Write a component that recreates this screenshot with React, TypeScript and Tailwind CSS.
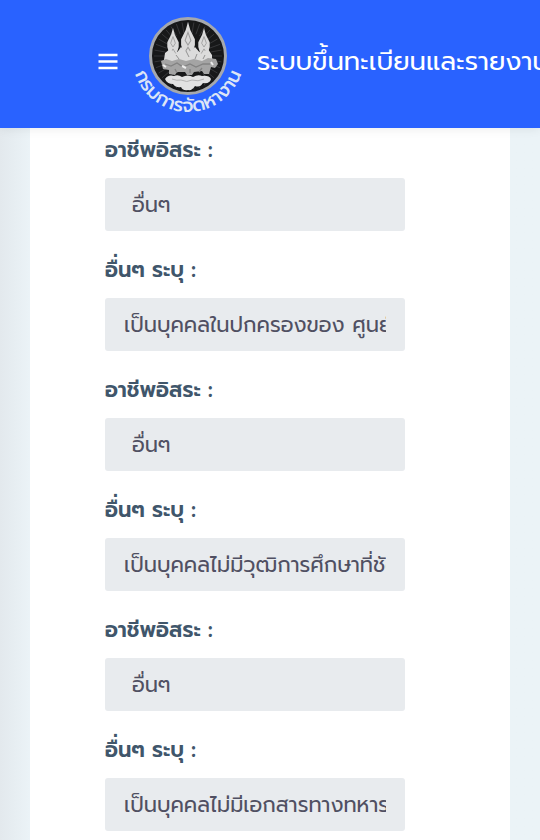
import React from 'react';

type Field = {
  id: string;
  label: string;
  value: string;
  kind: 'select' | 'text';
};

const OTHER = 'อื่นๆ';

const fields: Field[] = [
  { id: 'career-1', label: 'อาชีพอิสระ :', value: OTHER, kind: 'select' },
  { id: 'detail-1', label: 'อื่นๆ ระบุ :', value: 'เป็นบุคคลในปกครองของ ศูนย์พัฒนา', kind: 'text' },
  { id: 'career-2', label: 'อาชีพอิสระ :', value: OTHER, kind: 'select' },
  { id: 'detail-2', label: 'อื่นๆ ระบุ :', value: 'เป็นบุคคลไม่มีวุฒิการศึกษาที่ชัดเจน', kind: 'text' },
  { id: 'career-3', label: 'อาชีพอิสระ :', value: OTHER, kind: 'select' },
  { id: 'detail-3', label: 'อื่นๆ ระบุ :', value: 'เป็นบุคคลไม่มีเอกสารทางทหาร', kind: 'text' },
];

const rays = Array.from({ length: 36 }, (_, i) => i * 10);

function Spire({ x, y, scale }: { x: number; y: number; scale: number }) {
  return (
    <g transform={`translate(${x} ${y}) scale(${scale})`}>
      <path
        d="M0 -20 L2 -13 L6 -5 L6 0 L4.5 5 L8 9 L10 18 L-10 18 L-8 9 L-4.5 5 L-6 0 L-6 -5 L-2 -13 Z"
        fill="#dadada"
      />
      <path
        d="M0 -11 L2.5 -4 L0 0 L-2.5 -4 Z M0 2 L3 7 L0 11 L-3 7 Z M-5 10 L-4 15 M5 10 L4 15"
        fill="none"
        stroke="#9c9c9c"
        strokeWidth="0.9"
      />
    </g>
  );
}

function Emblem() {
  return (
    <svg viewBox="0 0 112 112" className="size-28 shrink-0 overflow-visible" role="img" aria-label="กรมการจัดหางาน">
      <defs>
        <path id="emblem-arc" d="M0 50 A56 56 0 0 0 112 50" />
      </defs>
      <g transform="translate(0 2)">
        <circle cx="56" cy="48" r="37.5" fill="#171819" stroke="#a5a8ad" strokeWidth="3" />
        <g stroke="#3a3b3d" strokeWidth="0.8">
          {rays.map((a) => (
            <path key={a} d="M56 25 V14" transform={`rotate(${a} 56 48)`} />
          ))}
        </g>
        <Spire x={41} y={39} scale={0.95} />
        <Spire x={72} y={39} scale={0.95} />
        <Spire x={56} y={37} scale={1.15} />
        <path d="M32 52 L33 45 L38 41 L44 46 L49 39 L56 45 L63 39 L69 46 L76 41 L80 47 L80 56 L36 56 Z" fill="#dcdcdc" />
        <path
          d="M29 53 L34 51 L40 53 L47 51 L54 53 L62 51 L70 53 L76 50 L84 51 L86 56 L83 60 L79 59 L77 66 L72 66 L70 63 L62 64 L60 67 L55 67 L53 64 L45 64 L43 67 L37 66 L37 62 L31 61 Z"
          fill="#a4a4a4"
        />
        <path
          d="M33 56 L39 58 L45 55 L51 59 L58 56 L64 59 L71 56 L78 56 M43 61 L45 65 M58 61 L58 65 M70 60 L67 64"
          fill="none"
          stroke="#828282"
          strokeWidth="1.3"
        />
        <path d="M50 58 L54 60 M31 57 L34 59 M79 54 L81 57" stroke="#ececec" strokeWidth="2" />
        <path d="M44 47 L47 51 M54 43 L57 49 M65 46 L63 51 M73 47 L71 51" stroke="#929292" strokeWidth="1" />
        <path
          d="M33 71 Q36 66 42 68 Q46 66 50 69 Q56 66 61 69 Q66 66 70 68 Q77 67 79 71 Q78 76 71 75 Q68 80 63 78 Q60 83 56 82 Q51 83 49 79 Q44 80 41 76 Q35 76 33 71 Z"
          fill="#e2e2e2"
        />
        <path d="M40 71 Q45 73 49 72 Q55 75 60 72 Q66 74 72 71" fill="none" stroke="#b4b4b4" strokeWidth="1" />
      </g>
      <text
        textAnchor="middle"
        fill="#dce5f6"
        className="font-['Prompt','Noto_Sans_Thai','Noto_Sans',sans-serif] text-[19px] font-medium"
      >
        <textPath href="#emblem-arc" startOffset="50%">
          กรมการจัดหางาน
        </textPath>
      </text>
    </svg>
  );
}

function FormField({ field }: { field: Field }) {
  const box =
    'block h-[53px] w-full appearance-none rounded-[3px] border-0 bg-[#e8ebee] text-[21px] text-[#505062] opacity-100';
  return (
    <div className="flex flex-col">
      <label htmlFor={field.id} className="mb-3 text-[21px] leading-8 font-semibold text-[#40566b]">
        {field.label}
      </label>
      {field.kind === 'select' ? (
        <select id={field.id} disabled defaultValue={field.value} className={`${box} px-[27px] pt-0.5`}>
          <option>{field.value}</option>
        </select>
      ) : (
        <input id={field.id} disabled defaultValue={field.value} className={`${box} px-[19px]`} />
      )}
    </div>
  );
}

export default function App() {
  return (
    <div className="h-screen overflow-hidden bg-[#ebf3f7] font-['Prompt','Noto_Sans_Thai','Noto_Sans',sans-serif]">
      <header className="relative flex h-32 items-center overflow-hidden bg-[#2962ff] pb-1 pl-[98px] text-white shadow-[0_1px_10px_rgba(0,0,0,0.08)]">
        <button type="button" aria-label="เมนู" className="mr-3.5 shrink-0">
          <svg viewBox="0 0 20 18" className="h-[18px] w-5" fill="none" stroke="currentColor" strokeWidth="2.5">
            <path d="M0.5 2 H19.5 M0.5 8.5 H19.5 M0.5 15 H19.5" />
          </svg>
        </button>
        <Emblem />
        <h1 className="ml-[13px] text-[26px] leading-10 font-normal whitespace-nowrap">ระบบขึ้นทะเบียนและรายงานตัว</h1>
      </header>
      <div className="bg-linear-to-r from-[#e3e9ed] to-[#ebf3f7] to-[30px] px-[30px]">
        <main className="bg-white pt-1.5 pr-[105px] pb-10 pl-[75px]">
          <form className="flex flex-col gap-[23px]">
            {fields.map((field) => (
              <FormField key={field.id} field={field} />
            ))}
          </form>
        </main>
      </div>
    </div>
  );
}
